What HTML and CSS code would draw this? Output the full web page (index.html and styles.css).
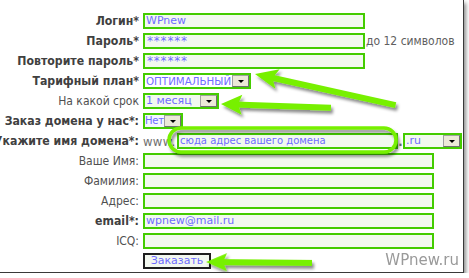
FILE: index.html
```html
<!DOCTYPE html>
<html lang="ru">
<head>
<meta charset="utf-8">
<title>Заказ</title>
<link rel="stylesheet" href="styles.css">
</head>
<body>
<div class="frame">
  <form class="form">
    <div class="lbl b">Логин*</div>
    <div class="ctl"><span class="input w-long">WPnew</span></div>

    <div class="lbl b">Пароль*</div>
    <div class="ctl"><span class="input w-long stars">******</span><span class="hint">до 12 символов</span></div>

    <div class="lbl b">Повторите пароль*</div>
    <div class="ctl"><span class="input w-long stars">******</span></div>

    <div class="lbl b">Тарифный план*</div>
    <div class="ctl"><span class="select w-plan"><span class="val">ОПТИМАЛЬНЫЙ</span><span class="arrow"></span></span></div>

    <div class="lbl">На какой срок</div>
    <div class="ctl"><span class="select w-term"><span class="val">1 месяц</span><span class="arrow"></span></span></div>

    <div class="lbl b">Заказ домена у нас*:</div>
    <div class="ctl"><span class="select w-yes"><span class="val">Нет</span><span class="arrow"></span></span></div>

    <div class="lbl b">Укажите имя домена*:</div>
    <div class="ctl domain"><span class="plain">www.</span><span class="input w-domain">сюда адрес вашего домена</span><span class="plain dot">.</span><span class="select w-zone"><span class="val">.ru</span><span class="arrow"></span></span></div>

    <div class="lbl">Ваше Имя:</div>
    <div class="ctl"><span class="input w-wide"></span></div>

    <div class="lbl">Фамилия:</div>
    <div class="ctl"><span class="input w-wide"></span></div>

    <div class="lbl">Адрес:</div>
    <div class="ctl"><span class="input w-wide"></span></div>

    <div class="lbl b">email*:</div>
    <div class="ctl"><span class="input w-wide">wpnew@mail.ru</span></div>

    <div class="lbl">ICQ:</div>
    <div class="ctl"><span class="input w-wide"></span></div>

    <div class="lbl"></div>
    <div class="ctl"><span class="button">Заказать</span></div>
  </form>

  <svg class="overlay" width="464" height="273" viewBox="0 0 464 273" aria-hidden="true">
    <defs>
      <filter id="sh" x="-20%" y="-40%" width="140%" height="180%">
        <feDropShadow dx="2" dy="3" stdDeviation="1.6" flood-color="#000" flood-opacity="0.45"/>
      </filter>
    </defs>
    <g fill="#77f000" stroke="none" filter="url(#sh)">
      <!-- arrow to tariff plan -->
      <g transform="translate(255 74) rotate(12.5)">
        <rect x="14" y="-3" width="130" height="6"/>
        <polygon points="0,0 23,-10 18,0 23,10"/>
      </g>
      <!-- arrow to term -->
      <g transform="translate(221 104) rotate(2)">
        <rect x="14" y="-3" width="96" height="6"/>
        <polygon points="0,0 21,-10 17,0 21,10"/>
      </g>
      <!-- arrow to button -->
      <g transform="translate(206 262) rotate(0.5)">
        <rect x="14" y="-3" width="92" height="6"/>
        <polygon points="0,0 21,-9 17,0 21,9"/>
      </g>
    </g>
    <rect x="169" y="128" width="227" height="24" rx="12" ry="12" fill="none" stroke="#77f000" stroke-width="3.5" filter="url(#sh)"/>
  </svg>

  <div class="wm">WPnew.ru</div>
</div>
</body>
</html>
```

FILE: styles.css
```css
html, body {
  margin: 0;
  padding: 0;
  background: #ffffff;
}

.frame {
  position: relative;
  width: 463px;
  height: 272px;
  border-right: 1px solid #3a3a3a;
  border-bottom: 1px solid #3a3a3a;
  box-shadow: 2px 3px 4px rgba(0, 0, 0, 0.45);
  overflow: hidden;
  background: #ffffff;
}

.form {
  display: grid;
  grid-template-columns: 139px 1fr;
  column-gap: 4px;
  row-gap: 4px;
  grid-auto-rows: 16px;
  padding-top: 13px;
  font-family: "DejaVu Sans Condensed", "DejaVu Sans", sans-serif;
}

.lbl {
  display: flex;
  justify-content: flex-end;
  align-items: center;
  white-space: nowrap;
  font-size: 12px;
  color: #505050;
  line-height: 16px;
}

.lbl.b {
  font-weight: bold;
  font-size: 12.2px;
  color: #404040;
}

.ctl {
  display: flex;
  align-items: center;
  height: 16px;
}

.input {
  box-sizing: border-box;
  height: 16px;
  border: 2px solid #44cc00;
  background: #f2f9ef;
  color: #6e6cff;
  font-family: "DejaVu Sans", sans-serif;
  font-size: 11px;
  line-height: 12px;
  padding-left: 1px;
  white-space: nowrap;
  overflow: hidden;
}

.stars {
  font-size: 12px;
  letter-spacing: 0.8px;
  padding-left: 2px;
}

.w-long { width: 222px; }
.w-wide { width: 291px; }
.w-domain { width: 221px; font-size: 10px; }

.hint {
  margin-left: 1px;
  font-size: 12px;
  color: #606060;
  white-space: nowrap;
}

.select {
  box-sizing: border-box;
  height: 16px;
  border: 2px solid #44cc00;
  background: #f2f9ef;
  display: flex;
  align-items: center;
  justify-content: space-between;
  color: #6e6cff;
  font-family: "DejaVu Sans", sans-serif;
  font-size: 11px;
  line-height: 12px;
  padding-left: 1px;
  overflow: hidden;
}

.w-plan { width: 108px; background: #ffffff; }
.w-plan .val { font-size: 10.3px; }
.w-term { width: 76px; }
.w-yes { width: 40px; padding-left: 0; background: #f4f6ff; }
.w-yes .val { font-size: 10px; letter-spacing: -0.2px; }
.w-zone { width: 59px; }

.val {
  white-space: nowrap;
  flex: none;
}

.arrow {
  box-sizing: border-box;
  flex: none;
  width: 17px;
  height: 12px;
  background: #ece9d8;
  border: 1px solid #a0a0a0;
  border-right-color: #707070;
  border-bottom-color: #707070;
  display: flex;
  align-items: center;
  justify-content: center;
}

.arrow::after {
  content: "";
  border-left: 3px solid transparent;
  border-right: 3px solid transparent;
  border-top: 3px solid #000;
}

.domain .plain {
  font-size: 13px;
  color: #707070;
  white-space: nowrap;
}

.domain .dot {
  width: 5px;
  text-align: center;
  font-weight: bold;
}

.domain .plain:first-child {
  width: 34px;
  letter-spacing: 0.3px;
}

.button {
  box-sizing: border-box;
  width: 68px;
  height: 16px;
  border: 2px solid #1e1e1e;
  background: #f3f8f0;
  color: #6e6cff;
  font-family: "DejaVu Sans", sans-serif;
  font-size: 11px;
  line-height: 12px;
  text-align: center;
}

.overlay {
  position: absolute;
  left: 0;
  top: 0;
  pointer-events: none;
}

.wm {
  position: absolute;
  right: 4px;
  bottom: 3px;
  font-family: "DejaVu Sans", sans-serif;
  font-size: 15px;
  color: #9a9a9a;
}
```
